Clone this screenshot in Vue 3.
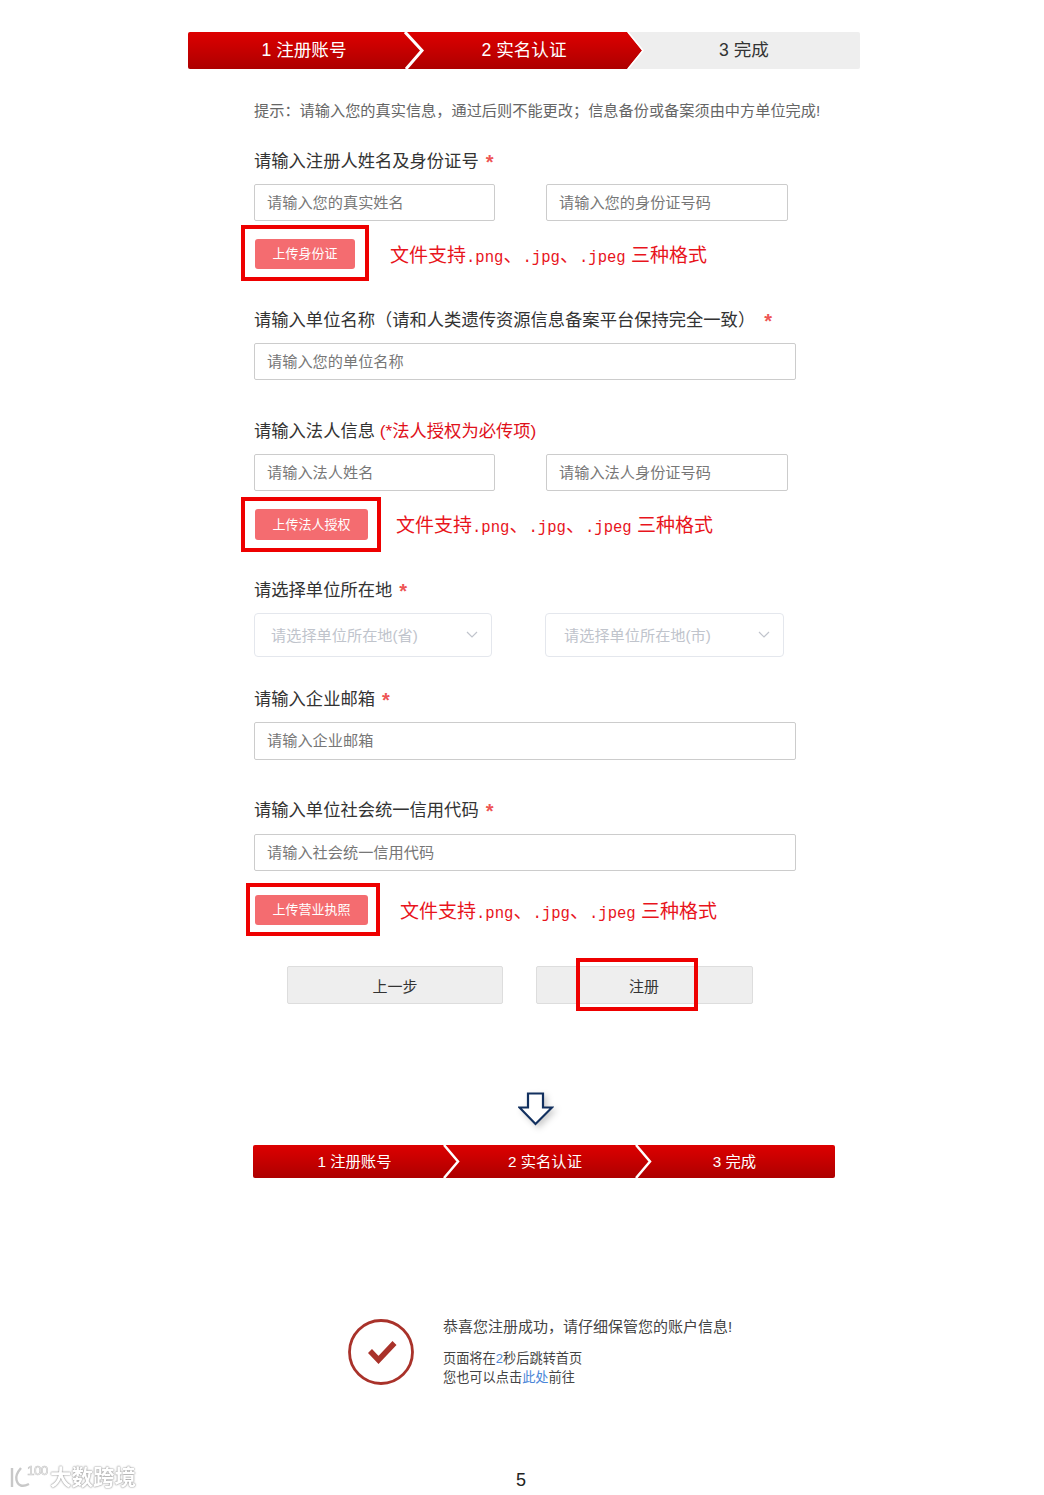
<script setup>
const doneSteps = [
  { n: 1, label: '注册账号', cls: 'd0' },
  { n: 2, label: '实名认证', cls: 'd1' },
  { n: 3, label: '完成', cls: 'd2' },
]
// latin parts are smaller than the chinese ones
const hint = [
  { t: '文件支持' },
  { t: '.png', lat: true },
  { t: '、' },
  { t: '.jpg', lat: true },
  { t: '、' },
  { t: '.jpeg', lat: true },
  { t: ' ', lat: true, gap: true },
  { t: '三种格式' },
]
</script>

<template>
  <div class="page">
    <div class="steps top">
      <div class="step red first"><span>1 注册账号</span></div>
      <div class="step red mid"><span>2 实名认证</span></div>
      <div class="step grey"><span>3 完成</span></div>
      <svg class="chev c1" width="22" height="37" viewBox="0 0 22 37"><path d="M1 0l17 18.500L2 37" fill="none" stroke="#fff" stroke-width="3"/></svg>
      <svg class="chev c2" width="22" height="37" viewBox="0 0 22 37"><path d="M1 0l15 18.500L1 37" fill="none" stroke="#fff" stroke-width="1.500"/></svg>
    </div>

    <div class="form">
      <p class="tip">提示：请输入您的真实信息，通过后则不能更改；信息备份或备案须由中方单位完成!</p>

      <div class="label l1">请输入注册人姓名及身份证号<i>*</i></div>
      <div class="two">
        <div class="input w241">请输入您的真实姓名</div>
        <div class="input w242">请输入您的身份证号码</div>
      </div>
      <div class="upload u1">
        <div class="mark m1"><button class="up b1">上传身份证</button></div>
        <span class="hint"><span v-for="(h, i) in hint" :key="i" :class="{ lat: h.lat, gap: h.gap }">{{ h.t }}</span></span>
      </div>

      <div class="label l2">请输入单位名称（请和人类遗传资源信息备案平台保持完全一致）<i class="far">*</i></div>
      <div class="input full">请输入您的单位名称</div>

      <div class="label l3">请输入法人信息 <em>(*法人授权为必传项)</em></div>
      <div class="two">
        <div class="input w241">请输入法人姓名</div>
        <div class="input w242">请输入法人身份证号码</div>
      </div>
      <div class="upload u2">
        <div class="mark m2"><button class="up b2">上传法人授权</button></div>
        <span class="hint"><span v-for="(h, i) in hint" :key="i" :class="{ lat: h.lat, gap: h.gap }">{{ h.t }}</span></span>
      </div>

      <div class="label l4">请选择单位所在地<i>*</i></div>
      <div class="selects">
        <div class="select s1">请选择单位所在地(省)
          <svg width="12" height="8" viewBox="0 0 12 8"><path d="M1 1l5 5 5-5" fill="none" stroke="#c0c4cc" stroke-width="1.2"/></svg>
        </div>
        <div class="select s2">请选择单位所在地(市)
          <svg width="12" height="8" viewBox="0 0 12 8"><path d="M1 1l5 5 5-5" fill="none" stroke="#c0c4cc" stroke-width="1.2"/></svg>
        </div>
      </div>

      <div class="label l5">请输入企业邮箱<i>*</i></div>
      <div class="input full h38">请输入企业邮箱</div>

      <div class="label l6">请输入单位社会统一信用代码<i>*</i></div>
      <div class="input full f3">请输入社会统一信用代码</div>
      <div class="upload u3">
        <div class="mark m3"><button class="up b2">上传营业执照</button></div>
        <span class="hint"><span v-for="(h, i) in hint" :key="i" :class="{ lat: h.lat, gap: h.gap }">{{ h.t }}</span></span>
      </div>

      <div class="actions">
        <button class="act a1">上一步</button>
        <button class="act a2">注册<span class="ring"></span></button>
      </div>
    </div>

    <svg class="arrow" width="36" height="36" viewBox="0 0 36 36">
      <path d="M10 1.500h15v14h9L17.500 32 1.500 15.500H10z" fill="#fff" stroke="#12305f" stroke-width="2.200"/>
    </svg>

    <div class="steps done">
      <div v-for="s in doneSteps" :key="s.n" class="step" :class="s.cls"><span>{{ s.n }} {{ s.label }}</span></div>
      <svg class="chev c3" width="20" height="33" viewBox="0 0 20 33"><path d="M1 0l14 16.500L1 33" fill="none" stroke="#fff" stroke-width="2.500"/></svg>
      <svg class="chev c4" width="20" height="33" viewBox="0 0 20 33"><path d="M1 0l14 16.500L1 33" fill="none" stroke="#fff" stroke-width="2.500"/></svg>
    </div>

    <div class="success">
      <svg width="68" height="68" viewBox="0 0 68 68">
        <circle cx="33" cy="33" r="31.500" fill="none" stroke="#a9322a" stroke-width="2.800"/>
        <path d="M22 32l8.500 9 16-17" fill="none" stroke="#a9322a" stroke-width="5.500"/>
      </svg>
      <div class="msg">
        <p class="big">恭喜您注册成功，请仔细保管您的账户信息!</p>
        <p>页面将在<a>2</a>秒后跳转首页</p>
        <p>您也可以点击<a>此处</a>前往</p>
      </div>
    </div>

    <div class="pageno">5</div>

    <div class="water">
      <svg width="42" height="30" viewBox="0 0 42 30">
        <g fill="none" stroke="#c8c8c8" stroke-width="2.400">
          <path d="M4 7v19"/>
          <path d="M13 7Q7 14 8.500 19 11 28 21 23"/>
        </g>
        <text x="19" y="14" font-size="13.500" letter-spacing="-.6" font-family="Liberation Sans" fill="#fff" stroke="#c8c8c8" stroke-width=".7">100</text>
      </svg>
      <span>大数跨境</span>
    </div>
  </div>
</template>

<style>
html, body { margin: 0; background: #fff; }
</style>

<style scoped>
.page {
  position: relative;
  width: 1044px;
  height: 1495px;
  overflow: hidden;
  background: #fff;
  font-family: "Liberation Sans", "Noto Sans CJK SC", sans-serif;
  color: #333;
}
.steps { display: flex; position: relative; }
.steps.top { width: 672px; height: 37px; margin: 32px 0 0 188px; background: #eee; border-radius: 2px; font-size: 17.600px; }
.step {
  display: flex;
  align-items: center;
  justify-content: center;
  height: 100%;
  box-sizing: border-box;
  padding-bottom: 4px;
}
.red { background: linear-gradient(#dd0000, #ad0000); color: #fff; }
.first { width: 232px; border-radius: 2px 0 0 2px; }
.mid {
  width: 222px;
  margin-right: -14px;
  padding-right: 14px;
  clip-path: polygon(0 0, 207px 0, 222px 50%, 207px 100%, 0 100%);
}
.grey { flex: 1; color: #333; }
.chev { position: absolute; top: 0; }
.c1 { left: 216px; }
.c2 { left: 439px; }
.form { margin-left: 254px; width: 560px; }
.tip { margin: 32px 0 0; font-size: 15.200px; line-height: 20px; color: #666; white-space: nowrap; }
.label { font-size: 17.300px; line-height: 24px; color: #333; white-space: nowrap; }
.label i { color: #ee5555; font-style: normal; font-weight: 700; margin-left: 7px; font-size: 20px; line-height: 0; vertical-align: -2px; }
.label i.far { margin-left: 9px; }
.label em { color: #e0101a; font-style: normal; }
.l1 { margin-top: 28px; }
.l2 { margin-top: 27px; }
.l3 { margin-top: 39px; }
.l4 { margin-top: 26px; }
.l5 { margin-top: 30px; }
.l6 { margin-top: 38px; }
.two { display: flex; gap: 51px; margin-top: 11px; }
.input {
  box-sizing: border-box;
  height: 37px;
  line-height: 35px;
  padding-left: 12px;
  border: 1px solid #ccc;
  border-radius: 2px;
  font-size: 15.200px;
  color: #777;
  white-space: nowrap;
}
.w241 { width: 241px; }
.w242 { width: 242px; }
.full { width: 542px; margin-top: 11px; }
.f3 { margin-top: 12px; }
.h38 { height: 38px; }
.upload { display: flex; align-items: center; margin-top: 4px; }
.u3 { margin-top: 12px; }
.mark { box-sizing: border-box; border: 4px solid #ee0000; display: flex; align-items: center; flex: none; }
.m1 { width: 128px; height: 56px; margin-left: -13px; padding: 2px 0 0 10px; }
.m2 { width: 140px; height: 55px; margin-left: -13px; padding-left: 10px; margin-top: 2px; }
.m3 { width: 134px; height: 53px; margin-left: -8px; padding-left: 5px; }
.up {
  border: 0;
  border-radius: 3px;
  background: #f46c70;
  color: #fff;
  font: 13px "Liberation Sans", "Noto Sans CJK SC", sans-serif;
  padding: 0 0 3px;
  height: 30px;
}
.b1 { width: 100px; }
.b2 { width: 113px; }
.m2 .b2 { height: 31px; }
.hint {
  font-family: "Noto Sans CJK SC", sans-serif;
  font-size: 19px;
  color: #e8141c;
  white-space: pre;
  margin-left: 21px;
}
.hint .lat { font-family: "Liberation Mono", monospace; font-size: 15.600px; }
.hint .gap { word-spacing: -4px; }
.u2 .hint { margin-left: 15px; }
.u3 .hint { margin-left: 20px; }
.selects { display: flex; margin-top: 11px; gap: 53px; }
.select {
  box-sizing: border-box;
  height: 44px;
  border: 1px solid #e4e7ed;
  border-radius: 4px;
  padding: 0 13px 3px 16px;
  display: flex;
  align-items: center;
  justify-content: space-between;
  font-size: 15.200px;
  color: #c0c4cc;
  white-space: nowrap;
}
.select svg { margin-top: 3px; }
.s1 { width: 238px; }
.s2 { width: 239px; padding-left: 18px; }
.actions { display: flex; gap: 33px; margin: 30px 0 0 33px; }
.act {
  position: relative;
  box-sizing: border-box;
  height: 38px;
  border: 1px solid #ddd;
  border-radius: 2px;
  background: #eee;
  color: #333;
  font: 15px "Liberation Sans", "Noto Sans CJK SC", sans-serif;
  padding: 0;
}
.a1 { width: 216px; }
.a2 { width: 217px; padding-right: 1px; }
.ring {
  position: absolute;
  left: 39px;
  top: -9px;
  width: 122px;
  height: 53px;
  box-sizing: border-box;
  border: 4px solid #ee0000;
}
.arrow { display: block; margin: 88px 0 0 518px; filter: drop-shadow(3px 3px 3px rgba(0, 0, 0, .2)); }
.steps.done {
  width: 582px;
  height: 33px;
  margin: 17px 0 0 253px;
  background: linear-gradient(#dd0000, #ad0000);
  border-radius: 2px;
  font-size: 15.300px;
  color: #fff;
}
.d0 { width: 203px; }
.d1 { width: 178px; }
.d2 { width: 201px; }
.c3 { left: 190px; }
.c4 { left: 382px; }
.success { display: flex; margin: 141px 0 0 348px; gap: 27px; }
.msg { color: #444; font-size: 13.200px; line-height: 19px; }
.msg p { margin: 0; white-space: nowrap; }
.msg p.big { font-size: 15px; margin: -2px 0 12px; line-height: 20px; }
.msg a { color: #4a86d8; }
.pageno { position: absolute; left: 516px; top: 1470px; font-size: 18px; color: #222; }
.water { position: absolute; left: 8px; top: 1460px; display: flex; align-items: center; filter: blur(.4px); }
.water span { font-size: 21.500px; color: #fff; font-weight: 700; text-shadow: 0 0 2px #888, 0 0 1px #999; white-space: nowrap; }
</style>
